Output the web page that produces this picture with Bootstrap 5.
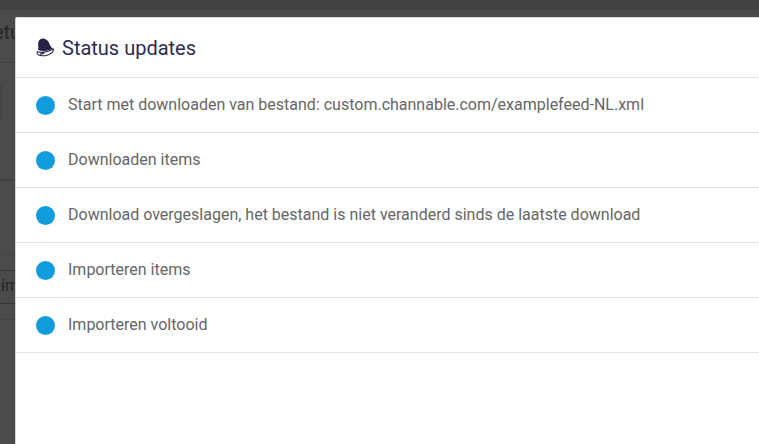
<!doctype html>
<html lang="nl">
<head>
<meta charset="utf-8">
<link href="https://cdn.jsdelivr.net/npm/bootstrap@5.3.0/dist/css/bootstrap.min.css" rel="stylesheet">
<style>
html,body{height:100%;overflow:hidden;background:#4b4b4b;font-family:Roboto,"Liberation Sans",sans-serif}
.backdrop-page{height:444px;overflow:hidden;color:#262626}
.top-rule{height:10px;background:#424242;border-bottom:1px solid #3e3e3e}
.page-title{height:53px;font-size:20px;line-height:44px;margin-left:-19px;border-bottom:1px solid #404040;white-space:nowrap}
.tab-box{height:37px;width:2px;margin-top:21px;border:1px solid #404040;border-left:0}
.band-rule{margin-top:58px;border-top:2px solid #404040}
.band-rule2{margin-top:73px;border-top:1px solid #444}
.input-row{margin-top:15px;height:34px;border-top:1px solid #333;border-bottom:1px solid #333;font-size:16px;line-height:30px;white-space:nowrap;padding-left:1px}
.band-rule3{margin-top:15px;border-top:1px solid #444}
.status-dialog{position:absolute;left:15px;top:17px;right:-20px;height:450px;background:#fff;border:0;border-top:1px solid #dcdcdc;border-left:1px solid #d4d4d4;border-radius:2px 0 0 0}
.status-head{height:60px;padding:0 0 0 20px;border-bottom:1px solid #e4e4e4}
.status-head h5{font-size:20px;font-weight:400;color:#2e2b50;margin:0;line-height:60px}
.status-head svg{width:18px;height:19px;margin-right:8px}
.status-item,.list-group-flush>.status-item:last-child{height:55px;padding:0 0 0 20px;border:0;border-bottom:1px solid #e4e4e4;border-radius:0;color:#666;font-size:16px;background:#fff}
.status-dot{width:19px;height:19px;border-radius:50%;background:#109cdd;margin-right:13px;flex:none}
</style>
</head>
<body>
<div class="backdrop-page">
  <div class="top-rule"></div>
  <div class="page-title">Setup</div>
  <div class="tab-box"></div>
  <div class="band-rule"></div>
  <div class="band-rule2"></div>
  <div class="input-row">imp</div>
  <div class="band-rule3"></div>
</div>
<div class="modal-content status-dialog">
  <div class="status-head d-flex align-items-center">
    <svg viewBox="0 0 18 19" aria-hidden="true"><path fill="#252245" d="M2 12C3 9 1.500 6 2.500 3.500 3.500 1 6.500 0 9 1c3 1 4 3.500 5 6 .6 1.500 1.500 2.500 3 3.500-4.500 2.500-10 3.300-15 1.500z"/><path fill="none" stroke="#252245" stroke-width="1.100" d="M1.300 13.700c4.700 1.600 11-.1 16-2.700.4 2.300-1.700 4.600-5.500 5.900-3.900 1.300-8.900 1.200-10.100-.6-.5-.8-.7-1.700-.4-2.600z"/><path fill="none" stroke="#252245" stroke-width="1.300" d="M4 16.200c1.500-.1 3-.7 4.200-1.500"/></svg>
    <h5>Status updates</h5>
  </div>
  <ul class="list-group list-group-flush">
    <li class="list-group-item status-item d-flex align-items-center"><span class="status-dot"></span>Start met downloaden van bestand: custom.channable.com/examplefeed-NL.xml</li>
    <li class="list-group-item status-item d-flex align-items-center"><span class="status-dot"></span>Downloaden items</li>
    <li class="list-group-item status-item d-flex align-items-center"><span class="status-dot"></span>Download overgeslagen, het bestand is niet veranderd sinds de laatste download</li>
    <li class="list-group-item status-item d-flex align-items-center"><span class="status-dot"></span>Importeren items</li>
    <li class="list-group-item status-item d-flex align-items-center"><span class="status-dot"></span>Importeren voltooid</li>
  </ul>
</div>
<script src="https://cdn.jsdelivr.net/npm/bootstrap@5.3.0/dist/js/bootstrap.bundle.min.js"></script>
</body>
</html>
